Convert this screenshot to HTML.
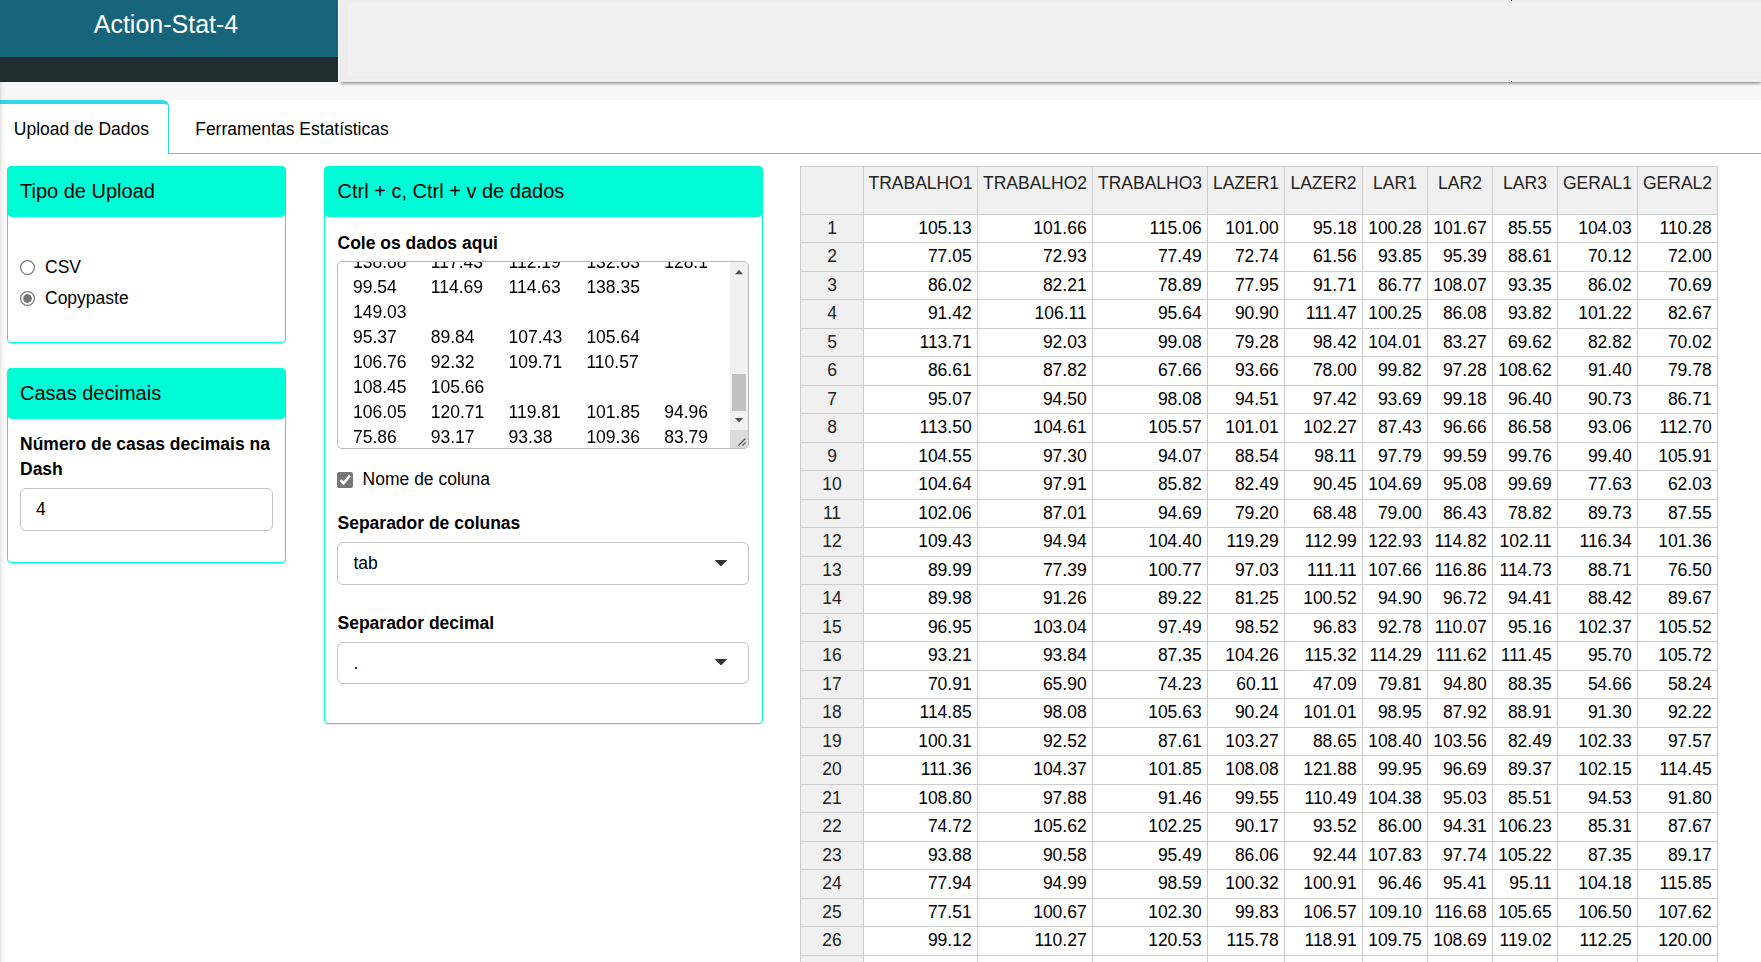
<!DOCTYPE html>
<html lang="pt-BR"><head><meta charset="utf-8"><title>Action-Stat-4</title>
<style>
html,body{margin:0;padding:0}
body{width:1761px;height:962px;overflow:hidden;position:relative;background:#fff;
 font-family:"Liberation Sans",Arial,Helvetica,sans-serif;font-size:17.5px;color:#000}
div,span{box-sizing:border-box}
.a{position:absolute}
.t{position:absolute;white-space:nowrap;line-height:25px;height:25px;margin-top:1px}
.b{font-weight:bold}
.box{position:absolute;border:1px solid #00fcd6;border-radius:4px;background:#fff;box-shadow:0 1px 1px rgba(0,0,0,.1)}
.bh{position:absolute;left:-1px;top:-1px;right:-1px;height:51px;background:#00fcd6;border-radius:5px}
.bt{position:absolute;left:12px;font-size:20px;line-height:25px;white-space:nowrap}
.inp{position:absolute;border:1px solid #c4c4c4;border-radius:6px;background:#fff}
.hl{position:absolute;height:1px;background:#ccc;left:800px;width:918px}
.vl{position:absolute;width:1px;background:#ccc;top:166px;height:800px}
.th{position:absolute;text-align:center;color:#222;line-height:25px;height:25px;white-space:nowrap}
.rh{position:absolute;text-align:center;color:#222;line-height:25px;height:25px;left:801px;width:62px}
.td{position:absolute;text-align:right;color:#000;line-height:25px;height:25px;white-space:nowrap}
</style></head><body>

<div class="a" style="left:0;top:82px;width:1761px;height:18px;background:#f8f8f8"></div>
<div class="a" style="left:339px;top:0;width:1422px;height:82px;background:#ededed;box-shadow:1px 2.5px 3px -1px rgba(0,0,0,.45)"><div class="a" style="left:9px;top:2px;right:0;height:74px;background:#f0f0f0"></div></div>
<div class="a" style="left:0;top:0;width:338px;height:57px;background:#17657b;color:#fff;text-align:center;font-size:25px;line-height:30px"><div class="a" style="left:-3px;width:338px;top:9px">Action-Stat-4</div></div>
<div class="a" style="left:0;top:57px;width:338px;height:25px;background:#222d32"></div>
<div class="a" style="left:167px;top:153px;width:1594px;height:1px;background:#2edbe8"></div>
<div class="a" style="left:-6px;top:100px;width:175px;height:54px;border-top:4px solid #2edbe8;border-right:1px solid #2edbe8;border-top-right-radius:6px;background:#fff"></div>
<div class="t" style="left:13.8px;top:116px">Upload de Dados</div>
<div class="t" style="left:195.2px;top:116px">Ferramentas Estatísticas</div>
<div class="box" style="left:7px;top:166px;width:279px;height:177px"><div class="bh"></div><div class="bt" style="top:12px">Tipo de Upload</div></div>
<svg class="a" style="left:19px;top:259px" width="17" height="17" viewBox="0 0 17 17"><circle cx="8.5" cy="8.5" r="6.9" fill="#fff" stroke="#767676" stroke-width="1.25"/></svg>
<svg class="a" style="left:19px;top:290px" width="17" height="17" viewBox="0 0 17 17"><circle cx="8.5" cy="8.5" r="6.9" fill="#fff" stroke="#767676" stroke-width="1.25"/><circle cx="8.5" cy="8.5" r="4.4" fill="#767676"/></svg>
<div class="t" style="left:45px;top:254px">CSV</div>
<div class="t" style="left:45px;top:285px">Copypaste</div>
<div class="box" style="left:7px;top:368px;width:279px;height:195px"><div class="bh"></div><div class="bt" style="top:12px">Casas decimais</div></div>
<div class="t b" style="left:20px;top:431px;height:50px;white-space:normal;width:262px">Número de casas decimais na Dash</div>
<div class="inp" style="left:20px;top:488px;width:253px;height:43px"></div>
<div class="t" style="left:36px;top:496px">4</div>
<div class="box" style="left:324px;top:166px;width:439px;height:558px"><div class="bh"></div><div class="bt" style="top:12px;left:12.5px">Ctrl + c, Ctrl + v de dados</div></div>
<div class="t b" style="left:337.5px;top:230px">Cole os dados aqui</div>
<div class="a" style="left:337px;top:261px;width:412px;height:188px;border:1px solid #b9b9b9;border-radius:5px;overflow:hidden;background:#fff">
<pre class="a" style="margin:0;left:15px;top:-12px;font:17.5px/25px 'Liberation Sans',Arial,sans-serif;tab-size:8;-moz-tab-size:8;white-space:pre;color:#000;will-change:transform">138.88	117.43	112.19	132.83	128.1
99.54	114.69	114.63	138.35
149.03
95.37	89.84	107.43	105.64
106.76	92.32	109.71	110.57
108.45	105.66
106.05	120.71	119.81	101.85	94.96
75.86	93.17	93.38	109.36	83.79
104.49	108.31	99.91	108.03	91.19</pre>
<div class="a" style="left:392px;top:0;width:18px;height:168px;background:#f1f1f1"></div>
<div class="a" style="left:392px;top:168px;width:18px;height:18px;background:#dcdcdc"></div>
<div class="a" style="left:394px;top:112px;width:14px;height:37px;background:#c1c1c1"></div>
<svg class="a" style="left:392px;top:0" width="18" height="186" viewBox="0 0 18 186"><path d="M5 12.2 L9 7.8 L13 12.2 Z" fill="#505050"/><path d="M5 156 L13 156 L9 160.5 Z" fill="#505050"/><path d="M8.5 183.5 L15.5 176.5 M12.5 183.5 L15.5 180.5" stroke="#555" stroke-width="1.2" fill="none"/></svg>
</div>
<div class="a" style="left:337px;top:472px;width:16px;height:16px;border-radius:2.5px;background:#767676"><svg class="a" style="left:0;top:0" width="16" height="16" viewBox="0 0 16 16"><path d="M3.5 8.1 L6.5 11.35 L12.9 3.6" stroke="#fff" stroke-width="2.5" fill="none"/></svg></div>
<div class="t" style="left:362.6px;top:466px">Nome de coluna</div>
<div class="t b" style="left:337.5px;top:510px">Separador de colunas</div>
<div class="inp" style="left:337px;top:542px;width:412px;height:43px"></div>
<div class="t" style="left:353.5px;top:550px">tab</div>
<svg class="a" style="left:714px;top:560px" width="14" height="7" viewBox="0 0 14 7"><path d="M0.7 0 L13.3 0 L7 6.5 Z" fill="#333"/></svg>
<div class="t b" style="left:337.5px;top:610px">Separador decimal</div>
<div class="inp" style="left:337px;top:642px;width:412px;height:42px"></div>
<div class="t" style="left:353.5px;top:650px">.</div>
<svg class="a" style="left:714px;top:659px" width="14" height="7" viewBox="0 0 14 7"><path d="M0.7 0 L13.3 0 L7 6.5 Z" fill="#333"/></svg>
<div class="a" style="left:800px;top:166px;width:918px;height:49px;background:#f0f0f0"></div>
<div class="a" style="left:800px;top:166px;width:64px;height:800px;background:#f0f0f0"></div>
<div class="hl" style="top:166px"></div>
<div class="hl" style="top:214px"></div>
<div class="hl" style="top:242px"></div>
<div class="hl" style="top:271px"></div>
<div class="hl" style="top:299px"></div>
<div class="hl" style="top:328px"></div>
<div class="hl" style="top:356px"></div>
<div class="hl" style="top:385px"></div>
<div class="hl" style="top:413px"></div>
<div class="hl" style="top:442px"></div>
<div class="hl" style="top:470px"></div>
<div class="hl" style="top:499px"></div>
<div class="hl" style="top:527px"></div>
<div class="hl" style="top:556px"></div>
<div class="hl" style="top:584px"></div>
<div class="hl" style="top:613px"></div>
<div class="hl" style="top:641px"></div>
<div class="hl" style="top:670px"></div>
<div class="hl" style="top:698px"></div>
<div class="hl" style="top:727px"></div>
<div class="hl" style="top:755px"></div>
<div class="hl" style="top:784px"></div>
<div class="hl" style="top:812px"></div>
<div class="hl" style="top:841px"></div>
<div class="hl" style="top:869px"></div>
<div class="hl" style="top:898px"></div>
<div class="hl" style="top:926px"></div>
<div class="hl" style="top:955px"></div>
<div class="hl" style="top:983px"></div>
<div class="vl" style="left:800px"></div>
<div class="vl" style="left:863px"></div>
<div class="vl" style="left:977px"></div>
<div class="vl" style="left:1092px"></div>
<div class="vl" style="left:1207px"></div>
<div class="vl" style="left:1284px"></div>
<div class="vl" style="left:1362px"></div>
<div class="vl" style="left:1427px"></div>
<div class="vl" style="left:1492px"></div>
<div class="vl" style="left:1557px"></div>
<div class="vl" style="left:1637px"></div>
<div class="vl" style="left:1717px"></div>
<div class="th" style="left:864px;width:113px;top:171px">TRABALHO1</div>
<div class="th" style="left:978px;width:114px;top:171px">TRABALHO2</div>
<div class="th" style="left:1093px;width:114px;top:171px">TRABALHO3</div>
<div class="th" style="left:1208px;width:76px;top:171px">LAZER1</div>
<div class="th" style="left:1285px;width:77px;top:171px">LAZER2</div>
<div class="th" style="left:1363px;width:64px;top:171px">LAR1</div>
<div class="th" style="left:1428px;width:64px;top:171px">LAR2</div>
<div class="th" style="left:1493px;width:64px;top:171px">LAR3</div>
<div class="th" style="left:1558px;width:79px;top:171px">GERAL1</div>
<div class="th" style="left:1638px;width:79px;top:171px">GERAL2</div>
<div class="rh" style="top:216px">1</div>
<div class="td" style="left:864px;width:107.7px;top:216px">105.13</div>
<div class="td" style="left:978px;width:108.7px;top:216px">101.66</div>
<div class="td" style="left:1093px;width:108.7px;top:216px">115.06</div>
<div class="td" style="left:1208px;width:70.7px;top:216px">101.00</div>
<div class="td" style="left:1285px;width:71.7px;top:216px">95.18</div>
<div class="td" style="left:1363px;width:58.7px;top:216px">100.28</div>
<div class="td" style="left:1428px;width:58.7px;top:216px">101.67</div>
<div class="td" style="left:1493px;width:58.7px;top:216px">85.55</div>
<div class="td" style="left:1558px;width:73.7px;top:216px">104.03</div>
<div class="td" style="left:1638px;width:73.7px;top:216px">110.28</div>
<div class="rh" style="top:244px">2</div>
<div class="td" style="left:864px;width:107.7px;top:244px">77.05</div>
<div class="td" style="left:978px;width:108.7px;top:244px">72.93</div>
<div class="td" style="left:1093px;width:108.7px;top:244px">77.49</div>
<div class="td" style="left:1208px;width:70.7px;top:244px">72.74</div>
<div class="td" style="left:1285px;width:71.7px;top:244px">61.56</div>
<div class="td" style="left:1363px;width:58.7px;top:244px">93.85</div>
<div class="td" style="left:1428px;width:58.7px;top:244px">95.39</div>
<div class="td" style="left:1493px;width:58.7px;top:244px">88.61</div>
<div class="td" style="left:1558px;width:73.7px;top:244px">70.12</div>
<div class="td" style="left:1638px;width:73.7px;top:244px">72.00</div>
<div class="rh" style="top:273px">3</div>
<div class="td" style="left:864px;width:107.7px;top:273px">86.02</div>
<div class="td" style="left:978px;width:108.7px;top:273px">82.21</div>
<div class="td" style="left:1093px;width:108.7px;top:273px">78.89</div>
<div class="td" style="left:1208px;width:70.7px;top:273px">77.95</div>
<div class="td" style="left:1285px;width:71.7px;top:273px">91.71</div>
<div class="td" style="left:1363px;width:58.7px;top:273px">86.77</div>
<div class="td" style="left:1428px;width:58.7px;top:273px">108.07</div>
<div class="td" style="left:1493px;width:58.7px;top:273px">93.35</div>
<div class="td" style="left:1558px;width:73.7px;top:273px">86.02</div>
<div class="td" style="left:1638px;width:73.7px;top:273px">70.69</div>
<div class="rh" style="top:301px">4</div>
<div class="td" style="left:864px;width:107.7px;top:301px">91.42</div>
<div class="td" style="left:978px;width:108.7px;top:301px">106.11</div>
<div class="td" style="left:1093px;width:108.7px;top:301px">95.64</div>
<div class="td" style="left:1208px;width:70.7px;top:301px">90.90</div>
<div class="td" style="left:1285px;width:71.7px;top:301px">111.47</div>
<div class="td" style="left:1363px;width:58.7px;top:301px">100.25</div>
<div class="td" style="left:1428px;width:58.7px;top:301px">86.08</div>
<div class="td" style="left:1493px;width:58.7px;top:301px">93.82</div>
<div class="td" style="left:1558px;width:73.7px;top:301px">101.22</div>
<div class="td" style="left:1638px;width:73.7px;top:301px">82.67</div>
<div class="rh" style="top:330px">5</div>
<div class="td" style="left:864px;width:107.7px;top:330px">113.71</div>
<div class="td" style="left:978px;width:108.7px;top:330px">92.03</div>
<div class="td" style="left:1093px;width:108.7px;top:330px">99.08</div>
<div class="td" style="left:1208px;width:70.7px;top:330px">79.28</div>
<div class="td" style="left:1285px;width:71.7px;top:330px">98.42</div>
<div class="td" style="left:1363px;width:58.7px;top:330px">104.01</div>
<div class="td" style="left:1428px;width:58.7px;top:330px">83.27</div>
<div class="td" style="left:1493px;width:58.7px;top:330px">69.62</div>
<div class="td" style="left:1558px;width:73.7px;top:330px">82.82</div>
<div class="td" style="left:1638px;width:73.7px;top:330px">70.02</div>
<div class="rh" style="top:358px">6</div>
<div class="td" style="left:864px;width:107.7px;top:358px">86.61</div>
<div class="td" style="left:978px;width:108.7px;top:358px">87.82</div>
<div class="td" style="left:1093px;width:108.7px;top:358px">67.66</div>
<div class="td" style="left:1208px;width:70.7px;top:358px">93.66</div>
<div class="td" style="left:1285px;width:71.7px;top:358px">78.00</div>
<div class="td" style="left:1363px;width:58.7px;top:358px">99.82</div>
<div class="td" style="left:1428px;width:58.7px;top:358px">97.28</div>
<div class="td" style="left:1493px;width:58.7px;top:358px">108.62</div>
<div class="td" style="left:1558px;width:73.7px;top:358px">91.40</div>
<div class="td" style="left:1638px;width:73.7px;top:358px">79.78</div>
<div class="rh" style="top:387px">7</div>
<div class="td" style="left:864px;width:107.7px;top:387px">95.07</div>
<div class="td" style="left:978px;width:108.7px;top:387px">94.50</div>
<div class="td" style="left:1093px;width:108.7px;top:387px">98.08</div>
<div class="td" style="left:1208px;width:70.7px;top:387px">94.51</div>
<div class="td" style="left:1285px;width:71.7px;top:387px">97.42</div>
<div class="td" style="left:1363px;width:58.7px;top:387px">93.69</div>
<div class="td" style="left:1428px;width:58.7px;top:387px">99.18</div>
<div class="td" style="left:1493px;width:58.7px;top:387px">96.40</div>
<div class="td" style="left:1558px;width:73.7px;top:387px">90.73</div>
<div class="td" style="left:1638px;width:73.7px;top:387px">86.71</div>
<div class="rh" style="top:415px">8</div>
<div class="td" style="left:864px;width:107.7px;top:415px">113.50</div>
<div class="td" style="left:978px;width:108.7px;top:415px">104.61</div>
<div class="td" style="left:1093px;width:108.7px;top:415px">105.57</div>
<div class="td" style="left:1208px;width:70.7px;top:415px">101.01</div>
<div class="td" style="left:1285px;width:71.7px;top:415px">102.27</div>
<div class="td" style="left:1363px;width:58.7px;top:415px">87.43</div>
<div class="td" style="left:1428px;width:58.7px;top:415px">96.66</div>
<div class="td" style="left:1493px;width:58.7px;top:415px">86.58</div>
<div class="td" style="left:1558px;width:73.7px;top:415px">93.06</div>
<div class="td" style="left:1638px;width:73.7px;top:415px">112.70</div>
<div class="rh" style="top:444px">9</div>
<div class="td" style="left:864px;width:107.7px;top:444px">104.55</div>
<div class="td" style="left:978px;width:108.7px;top:444px">97.30</div>
<div class="td" style="left:1093px;width:108.7px;top:444px">94.07</div>
<div class="td" style="left:1208px;width:70.7px;top:444px">88.54</div>
<div class="td" style="left:1285px;width:71.7px;top:444px">98.11</div>
<div class="td" style="left:1363px;width:58.7px;top:444px">97.79</div>
<div class="td" style="left:1428px;width:58.7px;top:444px">99.59</div>
<div class="td" style="left:1493px;width:58.7px;top:444px">99.76</div>
<div class="td" style="left:1558px;width:73.7px;top:444px">99.40</div>
<div class="td" style="left:1638px;width:73.7px;top:444px">105.91</div>
<div class="rh" style="top:472px">10</div>
<div class="td" style="left:864px;width:107.7px;top:472px">104.64</div>
<div class="td" style="left:978px;width:108.7px;top:472px">97.91</div>
<div class="td" style="left:1093px;width:108.7px;top:472px">85.82</div>
<div class="td" style="left:1208px;width:70.7px;top:472px">82.49</div>
<div class="td" style="left:1285px;width:71.7px;top:472px">90.45</div>
<div class="td" style="left:1363px;width:58.7px;top:472px">104.69</div>
<div class="td" style="left:1428px;width:58.7px;top:472px">95.08</div>
<div class="td" style="left:1493px;width:58.7px;top:472px">99.69</div>
<div class="td" style="left:1558px;width:73.7px;top:472px">77.63</div>
<div class="td" style="left:1638px;width:73.7px;top:472px">62.03</div>
<div class="rh" style="top:501px">11</div>
<div class="td" style="left:864px;width:107.7px;top:501px">102.06</div>
<div class="td" style="left:978px;width:108.7px;top:501px">87.01</div>
<div class="td" style="left:1093px;width:108.7px;top:501px">94.69</div>
<div class="td" style="left:1208px;width:70.7px;top:501px">79.20</div>
<div class="td" style="left:1285px;width:71.7px;top:501px">68.48</div>
<div class="td" style="left:1363px;width:58.7px;top:501px">79.00</div>
<div class="td" style="left:1428px;width:58.7px;top:501px">86.43</div>
<div class="td" style="left:1493px;width:58.7px;top:501px">78.82</div>
<div class="td" style="left:1558px;width:73.7px;top:501px">89.73</div>
<div class="td" style="left:1638px;width:73.7px;top:501px">87.55</div>
<div class="rh" style="top:529px">12</div>
<div class="td" style="left:864px;width:107.7px;top:529px">109.43</div>
<div class="td" style="left:978px;width:108.7px;top:529px">94.94</div>
<div class="td" style="left:1093px;width:108.7px;top:529px">104.40</div>
<div class="td" style="left:1208px;width:70.7px;top:529px">119.29</div>
<div class="td" style="left:1285px;width:71.7px;top:529px">112.99</div>
<div class="td" style="left:1363px;width:58.7px;top:529px">122.93</div>
<div class="td" style="left:1428px;width:58.7px;top:529px">114.82</div>
<div class="td" style="left:1493px;width:58.7px;top:529px">102.11</div>
<div class="td" style="left:1558px;width:73.7px;top:529px">116.34</div>
<div class="td" style="left:1638px;width:73.7px;top:529px">101.36</div>
<div class="rh" style="top:558px">13</div>
<div class="td" style="left:864px;width:107.7px;top:558px">89.99</div>
<div class="td" style="left:978px;width:108.7px;top:558px">77.39</div>
<div class="td" style="left:1093px;width:108.7px;top:558px">100.77</div>
<div class="td" style="left:1208px;width:70.7px;top:558px">97.03</div>
<div class="td" style="left:1285px;width:71.7px;top:558px">111.11</div>
<div class="td" style="left:1363px;width:58.7px;top:558px">107.66</div>
<div class="td" style="left:1428px;width:58.7px;top:558px">116.86</div>
<div class="td" style="left:1493px;width:58.7px;top:558px">114.73</div>
<div class="td" style="left:1558px;width:73.7px;top:558px">88.71</div>
<div class="td" style="left:1638px;width:73.7px;top:558px">76.50</div>
<div class="rh" style="top:586px">14</div>
<div class="td" style="left:864px;width:107.7px;top:586px">89.98</div>
<div class="td" style="left:978px;width:108.7px;top:586px">91.26</div>
<div class="td" style="left:1093px;width:108.7px;top:586px">89.22</div>
<div class="td" style="left:1208px;width:70.7px;top:586px">81.25</div>
<div class="td" style="left:1285px;width:71.7px;top:586px">100.52</div>
<div class="td" style="left:1363px;width:58.7px;top:586px">94.90</div>
<div class="td" style="left:1428px;width:58.7px;top:586px">96.72</div>
<div class="td" style="left:1493px;width:58.7px;top:586px">94.41</div>
<div class="td" style="left:1558px;width:73.7px;top:586px">88.42</div>
<div class="td" style="left:1638px;width:73.7px;top:586px">89.67</div>
<div class="rh" style="top:615px">15</div>
<div class="td" style="left:864px;width:107.7px;top:615px">96.95</div>
<div class="td" style="left:978px;width:108.7px;top:615px">103.04</div>
<div class="td" style="left:1093px;width:108.7px;top:615px">97.49</div>
<div class="td" style="left:1208px;width:70.7px;top:615px">98.52</div>
<div class="td" style="left:1285px;width:71.7px;top:615px">96.83</div>
<div class="td" style="left:1363px;width:58.7px;top:615px">92.78</div>
<div class="td" style="left:1428px;width:58.7px;top:615px">110.07</div>
<div class="td" style="left:1493px;width:58.7px;top:615px">95.16</div>
<div class="td" style="left:1558px;width:73.7px;top:615px">102.37</div>
<div class="td" style="left:1638px;width:73.7px;top:615px">105.52</div>
<div class="rh" style="top:643px">16</div>
<div class="td" style="left:864px;width:107.7px;top:643px">93.21</div>
<div class="td" style="left:978px;width:108.7px;top:643px">93.84</div>
<div class="td" style="left:1093px;width:108.7px;top:643px">87.35</div>
<div class="td" style="left:1208px;width:70.7px;top:643px">104.26</div>
<div class="td" style="left:1285px;width:71.7px;top:643px">115.32</div>
<div class="td" style="left:1363px;width:58.7px;top:643px">114.29</div>
<div class="td" style="left:1428px;width:58.7px;top:643px">111.62</div>
<div class="td" style="left:1493px;width:58.7px;top:643px">111.45</div>
<div class="td" style="left:1558px;width:73.7px;top:643px">95.70</div>
<div class="td" style="left:1638px;width:73.7px;top:643px">105.72</div>
<div class="rh" style="top:672px">17</div>
<div class="td" style="left:864px;width:107.7px;top:672px">70.91</div>
<div class="td" style="left:978px;width:108.7px;top:672px">65.90</div>
<div class="td" style="left:1093px;width:108.7px;top:672px">74.23</div>
<div class="td" style="left:1208px;width:70.7px;top:672px">60.11</div>
<div class="td" style="left:1285px;width:71.7px;top:672px">47.09</div>
<div class="td" style="left:1363px;width:58.7px;top:672px">79.81</div>
<div class="td" style="left:1428px;width:58.7px;top:672px">94.80</div>
<div class="td" style="left:1493px;width:58.7px;top:672px">88.35</div>
<div class="td" style="left:1558px;width:73.7px;top:672px">54.66</div>
<div class="td" style="left:1638px;width:73.7px;top:672px">58.24</div>
<div class="rh" style="top:700px">18</div>
<div class="td" style="left:864px;width:107.7px;top:700px">114.85</div>
<div class="td" style="left:978px;width:108.7px;top:700px">98.08</div>
<div class="td" style="left:1093px;width:108.7px;top:700px">105.63</div>
<div class="td" style="left:1208px;width:70.7px;top:700px">90.24</div>
<div class="td" style="left:1285px;width:71.7px;top:700px">101.01</div>
<div class="td" style="left:1363px;width:58.7px;top:700px">98.95</div>
<div class="td" style="left:1428px;width:58.7px;top:700px">87.92</div>
<div class="td" style="left:1493px;width:58.7px;top:700px">88.91</div>
<div class="td" style="left:1558px;width:73.7px;top:700px">91.30</div>
<div class="td" style="left:1638px;width:73.7px;top:700px">92.22</div>
<div class="rh" style="top:729px">19</div>
<div class="td" style="left:864px;width:107.7px;top:729px">100.31</div>
<div class="td" style="left:978px;width:108.7px;top:729px">92.52</div>
<div class="td" style="left:1093px;width:108.7px;top:729px">87.61</div>
<div class="td" style="left:1208px;width:70.7px;top:729px">103.27</div>
<div class="td" style="left:1285px;width:71.7px;top:729px">88.65</div>
<div class="td" style="left:1363px;width:58.7px;top:729px">108.40</div>
<div class="td" style="left:1428px;width:58.7px;top:729px">103.56</div>
<div class="td" style="left:1493px;width:58.7px;top:729px">82.49</div>
<div class="td" style="left:1558px;width:73.7px;top:729px">102.33</div>
<div class="td" style="left:1638px;width:73.7px;top:729px">97.57</div>
<div class="rh" style="top:757px">20</div>
<div class="td" style="left:864px;width:107.7px;top:757px">111.36</div>
<div class="td" style="left:978px;width:108.7px;top:757px">104.37</div>
<div class="td" style="left:1093px;width:108.7px;top:757px">101.85</div>
<div class="td" style="left:1208px;width:70.7px;top:757px">108.08</div>
<div class="td" style="left:1285px;width:71.7px;top:757px">121.88</div>
<div class="td" style="left:1363px;width:58.7px;top:757px">99.95</div>
<div class="td" style="left:1428px;width:58.7px;top:757px">96.69</div>
<div class="td" style="left:1493px;width:58.7px;top:757px">89.37</div>
<div class="td" style="left:1558px;width:73.7px;top:757px">102.15</div>
<div class="td" style="left:1638px;width:73.7px;top:757px">114.45</div>
<div class="rh" style="top:786px">21</div>
<div class="td" style="left:864px;width:107.7px;top:786px">108.80</div>
<div class="td" style="left:978px;width:108.7px;top:786px">97.88</div>
<div class="td" style="left:1093px;width:108.7px;top:786px">91.46</div>
<div class="td" style="left:1208px;width:70.7px;top:786px">99.55</div>
<div class="td" style="left:1285px;width:71.7px;top:786px">110.49</div>
<div class="td" style="left:1363px;width:58.7px;top:786px">104.38</div>
<div class="td" style="left:1428px;width:58.7px;top:786px">95.03</div>
<div class="td" style="left:1493px;width:58.7px;top:786px">85.51</div>
<div class="td" style="left:1558px;width:73.7px;top:786px">94.53</div>
<div class="td" style="left:1638px;width:73.7px;top:786px">91.80</div>
<div class="rh" style="top:814px">22</div>
<div class="td" style="left:864px;width:107.7px;top:814px">74.72</div>
<div class="td" style="left:978px;width:108.7px;top:814px">105.62</div>
<div class="td" style="left:1093px;width:108.7px;top:814px">102.25</div>
<div class="td" style="left:1208px;width:70.7px;top:814px">90.17</div>
<div class="td" style="left:1285px;width:71.7px;top:814px">93.52</div>
<div class="td" style="left:1363px;width:58.7px;top:814px">86.00</div>
<div class="td" style="left:1428px;width:58.7px;top:814px">94.31</div>
<div class="td" style="left:1493px;width:58.7px;top:814px">106.23</div>
<div class="td" style="left:1558px;width:73.7px;top:814px">85.31</div>
<div class="td" style="left:1638px;width:73.7px;top:814px">87.67</div>
<div class="rh" style="top:843px">23</div>
<div class="td" style="left:864px;width:107.7px;top:843px">93.88</div>
<div class="td" style="left:978px;width:108.7px;top:843px">90.58</div>
<div class="td" style="left:1093px;width:108.7px;top:843px">95.49</div>
<div class="td" style="left:1208px;width:70.7px;top:843px">86.06</div>
<div class="td" style="left:1285px;width:71.7px;top:843px">92.44</div>
<div class="td" style="left:1363px;width:58.7px;top:843px">107.83</div>
<div class="td" style="left:1428px;width:58.7px;top:843px">97.74</div>
<div class="td" style="left:1493px;width:58.7px;top:843px">105.22</div>
<div class="td" style="left:1558px;width:73.7px;top:843px">87.35</div>
<div class="td" style="left:1638px;width:73.7px;top:843px">89.17</div>
<div class="rh" style="top:871px">24</div>
<div class="td" style="left:864px;width:107.7px;top:871px">77.94</div>
<div class="td" style="left:978px;width:108.7px;top:871px">94.99</div>
<div class="td" style="left:1093px;width:108.7px;top:871px">98.59</div>
<div class="td" style="left:1208px;width:70.7px;top:871px">100.32</div>
<div class="td" style="left:1285px;width:71.7px;top:871px">100.91</div>
<div class="td" style="left:1363px;width:58.7px;top:871px">96.46</div>
<div class="td" style="left:1428px;width:58.7px;top:871px">95.41</div>
<div class="td" style="left:1493px;width:58.7px;top:871px">95.11</div>
<div class="td" style="left:1558px;width:73.7px;top:871px">104.18</div>
<div class="td" style="left:1638px;width:73.7px;top:871px">115.85</div>
<div class="rh" style="top:900px">25</div>
<div class="td" style="left:864px;width:107.7px;top:900px">77.51</div>
<div class="td" style="left:978px;width:108.7px;top:900px">100.67</div>
<div class="td" style="left:1093px;width:108.7px;top:900px">102.30</div>
<div class="td" style="left:1208px;width:70.7px;top:900px">99.83</div>
<div class="td" style="left:1285px;width:71.7px;top:900px">106.57</div>
<div class="td" style="left:1363px;width:58.7px;top:900px">109.10</div>
<div class="td" style="left:1428px;width:58.7px;top:900px">116.68</div>
<div class="td" style="left:1493px;width:58.7px;top:900px">105.65</div>
<div class="td" style="left:1558px;width:73.7px;top:900px">106.50</div>
<div class="td" style="left:1638px;width:73.7px;top:900px">107.62</div>
<div class="rh" style="top:928px">26</div>
<div class="td" style="left:864px;width:107.7px;top:928px">99.12</div>
<div class="td" style="left:978px;width:108.7px;top:928px">110.27</div>
<div class="td" style="left:1093px;width:108.7px;top:928px">120.53</div>
<div class="td" style="left:1208px;width:70.7px;top:928px">115.78</div>
<div class="td" style="left:1285px;width:71.7px;top:928px">118.91</div>
<div class="td" style="left:1363px;width:58.7px;top:928px">109.75</div>
<div class="td" style="left:1428px;width:58.7px;top:928px">108.69</div>
<div class="td" style="left:1493px;width:58.7px;top:928px">119.02</div>
<div class="td" style="left:1558px;width:73.7px;top:928px">112.25</div>
<div class="td" style="left:1638px;width:73.7px;top:928px">120.00</div>
<div class="rh" style="top:957px">27</div>
<div class="td" style="left:864px;width:107.7px;top:957px">99.54</div>
<div class="td" style="left:978px;width:108.7px;top:957px">114.69</div>
<div class="td" style="left:1093px;width:108.7px;top:957px">114.63</div>
<div class="td" style="left:1208px;width:70.7px;top:957px">138.35</div>
<div class="td" style="left:1285px;width:71.7px;top:957px">149.03</div>
<div class="td" style="left:1363px;width:58.7px;top:957px">95.37</div>
<div class="td" style="left:1428px;width:58.7px;top:957px">89.84</div>
<div class="td" style="left:1493px;width:58.7px;top:957px">107.43</div>
<div class="td" style="left:1558px;width:73.7px;top:957px">105.64</div>
<div class="td" style="left:1638px;width:73.7px;top:957px">106.76</div>
<div class="a" style="left:0;top:82px;width:6px;height:880px;background:linear-gradient(to right,rgba(0,0,0,.10),rgba(0,0,0,.04) 40%,rgba(0,0,0,0))"></div>
<div class="a" style="left:1511px;top:0;width:1px;height:1px;background:#222"></div>
<div class="a" style="left:1511px;top:81px;width:1px;height:1px;background:#222"></div>
</body></html>
